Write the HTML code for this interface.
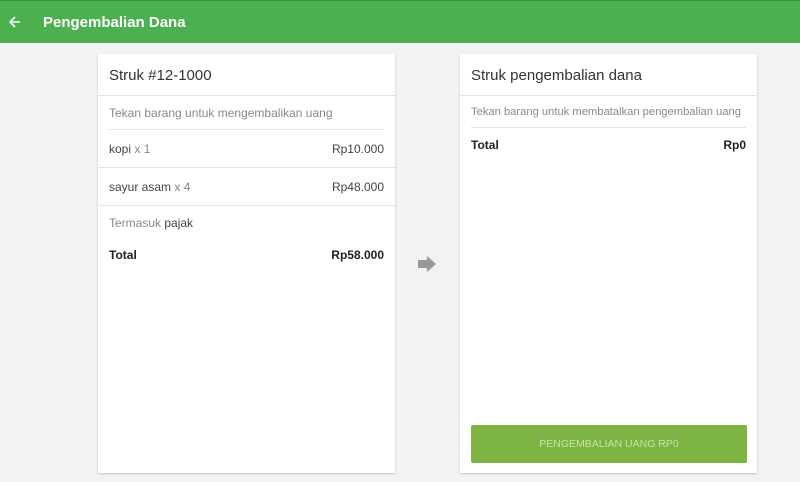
<!DOCTYPE html>
<html><head><style>
body{margin:0;width:800px;height:482px;background:#f2f2f2;font-family:"Liberation Sans",sans-serif;position:relative;overflow:hidden}
.hdr{position:absolute;left:0;top:0;width:800px;height:43px;background:#4caf50;border-top:1px solid #3e8e41;box-sizing:border-box}
.hdr .t{position:absolute;left:43px;top:13px;color:#fff;font-size:15px;font-weight:bold}
.card{position:absolute;top:54px;width:297px;height:419px;background:#fff;box-shadow:0 1px 2px rgba(0,0,0,.2)}
.h{height:42px;border-bottom:1px solid #e2e2e2;font-size:15px;color:#333;padding:13px 0 0 11px;box-sizing:border-box}
.row{position:absolute;left:11px;right:11px;font-size:12px;color:#444}
.g{color:#888}
.r{position:absolute;right:0;top:0}
.b{font-weight:bold;color:#222}
.line{position:absolute;height:1px;background:#e4e4e4}
</style></head><body>
<div class="hdr"><svg style="position:absolute;left:8px;top:14px" width="14" height="14" viewBox="0 0 14 14"><path d="M12 7H2M7 2L2 7l5 5" stroke="#fff" stroke-width="1.6" fill="none"/></svg><div class="t">Pengembalian Dana</div></div>
<div class="card" style="left:98px">
<div class="h">Struk #12-1000</div>
<div class="row g" style="top:52px">Tekan barang untuk mengembalikan uang</div>
<div class="line" style="left:11px;right:11px;top:75px"></div>
<div class="row" style="top:88px">kopi <span class="g">x 1</span><span class="r">Rp10.000</span></div>
<div class="line" style="left:0;right:0;top:113px"></div>
<div class="row" style="top:126px">sayur asam <span class="g">x 4</span><span class="r">Rp48.000</span></div>
<div class="line" style="left:0;right:0;top:151px"></div>
<div class="row" style="top:162px"><span class="g">Termasuk</span> pajak</div>
<div class="row b" style="top:194px">Total<span class="r">Rp58.000</span></div>
</div>
<svg style="position:absolute;left:418px;top:256px" width="19" height="16" viewBox="0 0 19 16"><path d="M0 4h9V0l9 8-9 8v-4H0z" fill="#999"/></svg>
<div class="card" style="left:460px">
<div class="h">Struk pengembalian dana</div>
<div class="row g" style="top:52px;font-size:11.2px;white-space:nowrap">Tekan barang untuk membatalkan pengembalian uang</div>
<div class="line" style="left:11px;right:11px;top:73px"></div>
<div class="row b" style="top:84px">Total<span class="r">Rp0</span></div>
<div style="position:absolute;left:11px;right:10px;top:371px;height:38px;background:#7cb342;border-radius:2px;color:#c9e3ad;font-size:10.5px;text-align:center;line-height:38px">PENGEMBALIAN UANG RP0</div>
</div>
</body></html>
